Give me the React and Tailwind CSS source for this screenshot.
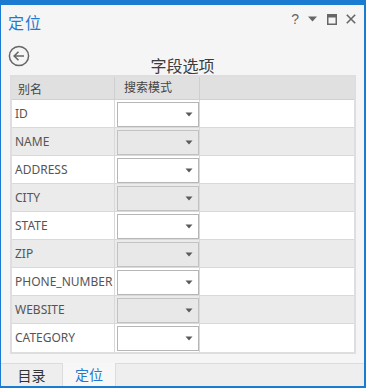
import React from "react";

const rows = ["ID","NAME","ADDRESS","CITY","STATE","ZIP","PHONE_NUMBER","WEBSITE","CATEGORY"];
const font = { fontFamily: '"Noto Sans","Noto Sans CJK SC",sans-serif' };

function Caret() {
  return (
    <svg width="8" height="5" viewBox="0 0 8 5" className="block">
      <path d="M0.5 0.5 L7.5 0.5 L4 4.5 Z" fill="#5a5a5a" />
    </svg>
  );
}

export default function App() {
  return (
    <div className="w-[366px] h-[388px] bg-[#1a7bd0] pt-[5px] pl-[1px] pr-[2px] pb-[2px]" style={font}>
      <div className="w-full h-full flex flex-col bg-[#f5f5f5]">
        {/* title bar */}
        <div className="h-[36px] flex items-start relative">
          <div className="ml-[7px] mt-[5px] text-[16px] leading-[24px] text-[#1f7ad0] tracking-[1px]" style={{fontFamily:'"Noto Sans CJK SC",sans-serif'}}>定位</div>
          <div className="ml-auto mr-[8px] mt-[6px] flex items-center gap-[9px] text-[#666]">
            <span className="text-[14px] leading-[16px]" style={{fontFamily:'"Liberation Sans",sans-serif'}}>?</span>
            <svg width="10" height="6" viewBox="0 0 10 6"><path d="M0 0.5 L9 0.5 L4.5 5.5 Z" fill="#666" /></svg>
            <svg width="10" height="11" viewBox="0 0 10 11"><rect x="0.75" y="0.75" width="8.5" height="9.5" fill="none" stroke="#666" strokeWidth="1.5"/><rect x="0.5" y="0.5" width="9" height="3" fill="#666"/></svg>
            <svg width="10" height="10" viewBox="0 0 10 10"><path d="M0.8 0.8 L9.2 9.2 M9.2 0.8 L0.8 9.2" stroke="#666" strokeWidth="1.6"/></svg>
          </div>
        </div>
        {/* back + title */}
        <div className="h-[34px] relative flex items-start">
          <svg width="22" height="22" viewBox="0 0 22 22" className="absolute left-[7px] top-[4px]">
            <circle cx="11" cy="11" r="9.6" fill="none" stroke="#666" strokeWidth="1.5"/>
            <path d="M16 11 H6.5 M10.5 6.8 L6.2 11 L10.5 15.2" fill="none" stroke="#666" strokeWidth="1.6"/>
          </svg>
          <div className="w-full text-center text-[16px] leading-[22px] mt-[13px] text-[#3c3c3c]" style={{fontFamily:'"Noto Sans CJK SC",sans-serif'}}>字段选项</div>
        </div>
        {/* table */}
        <div className="ml-[9px] mr-[8px] border-2 border-[#dedede] bg-white">
          <div className="flex h-[23px] bg-[#e0e0e0] border-b border-[#d0d0d0] text-[12px] text-[#444]">
            <div className="w-[103px] border-r border-[#cfcfcf] pl-[6px] leading-[23px]" style={{fontFamily:'"Noto Sans CJK SC",sans-serif'}}>别名</div>
            <div className="w-[85px] border-r border-[#cfcfcf] pl-[9px] leading-[20px]" style={{fontFamily:'"Noto Sans CJK SC",sans-serif'}}>搜索模式</div>
            <div className="flex-1"></div>
          </div>
          {rows.map((r, i) => {
            const alt = i % 2 === 1;
            return (
              <div key={r} className={"flex h-[28px] border-b border-[#d9d9d9] last:border-b-0 " + (alt ? "bg-[#ebebeb]" : "bg-white")}>
                <div className="w-[103px] border-r border-[#d9d9d9] pl-[3px] text-[12px] leading-[27px] text-[#555] whitespace-nowrap overflow-hidden">{r}</div>
                <div className="w-[85px] border-r border-[#d9d9d9] pl-[2px] pt-[2px]">
                  <div className={"w-[82px] h-[25px] border flex items-center justify-end pr-[5px] " + (alt ? "bg-[#e8e8e8] border-[#c2c2c2]" : "bg-white border-[#b6b6b6]")}>
                    <Caret />
                  </div>
                </div>
                <div className="flex-1"></div>
              </div>
            );
          })}
        </div>
        <div className="flex-1"></div>
        {/* tab bar */}
        <div className="h-[23px] flex bg-[#eeeeee] border-t border-[#dcdcdc]">
          <div className="w-[62px] text-center text-[14px] leading-[22px] text-[#333] border-r border-[#dcdcdc]" style={{fontFamily:'"Noto Sans CJK SC",sans-serif'}}>目录</div>
          <div className="w-[53px] text-center text-[14px] leading-[22px] text-[#1f7ad0] bg-[#f7f7f7] border-r border-[#dcdcdc] -mt-[1px]" style={{fontFamily:'"Noto Sans CJK SC",sans-serif'}}>定位</div>
        </div>
      </div>
    </div>
  );
}
